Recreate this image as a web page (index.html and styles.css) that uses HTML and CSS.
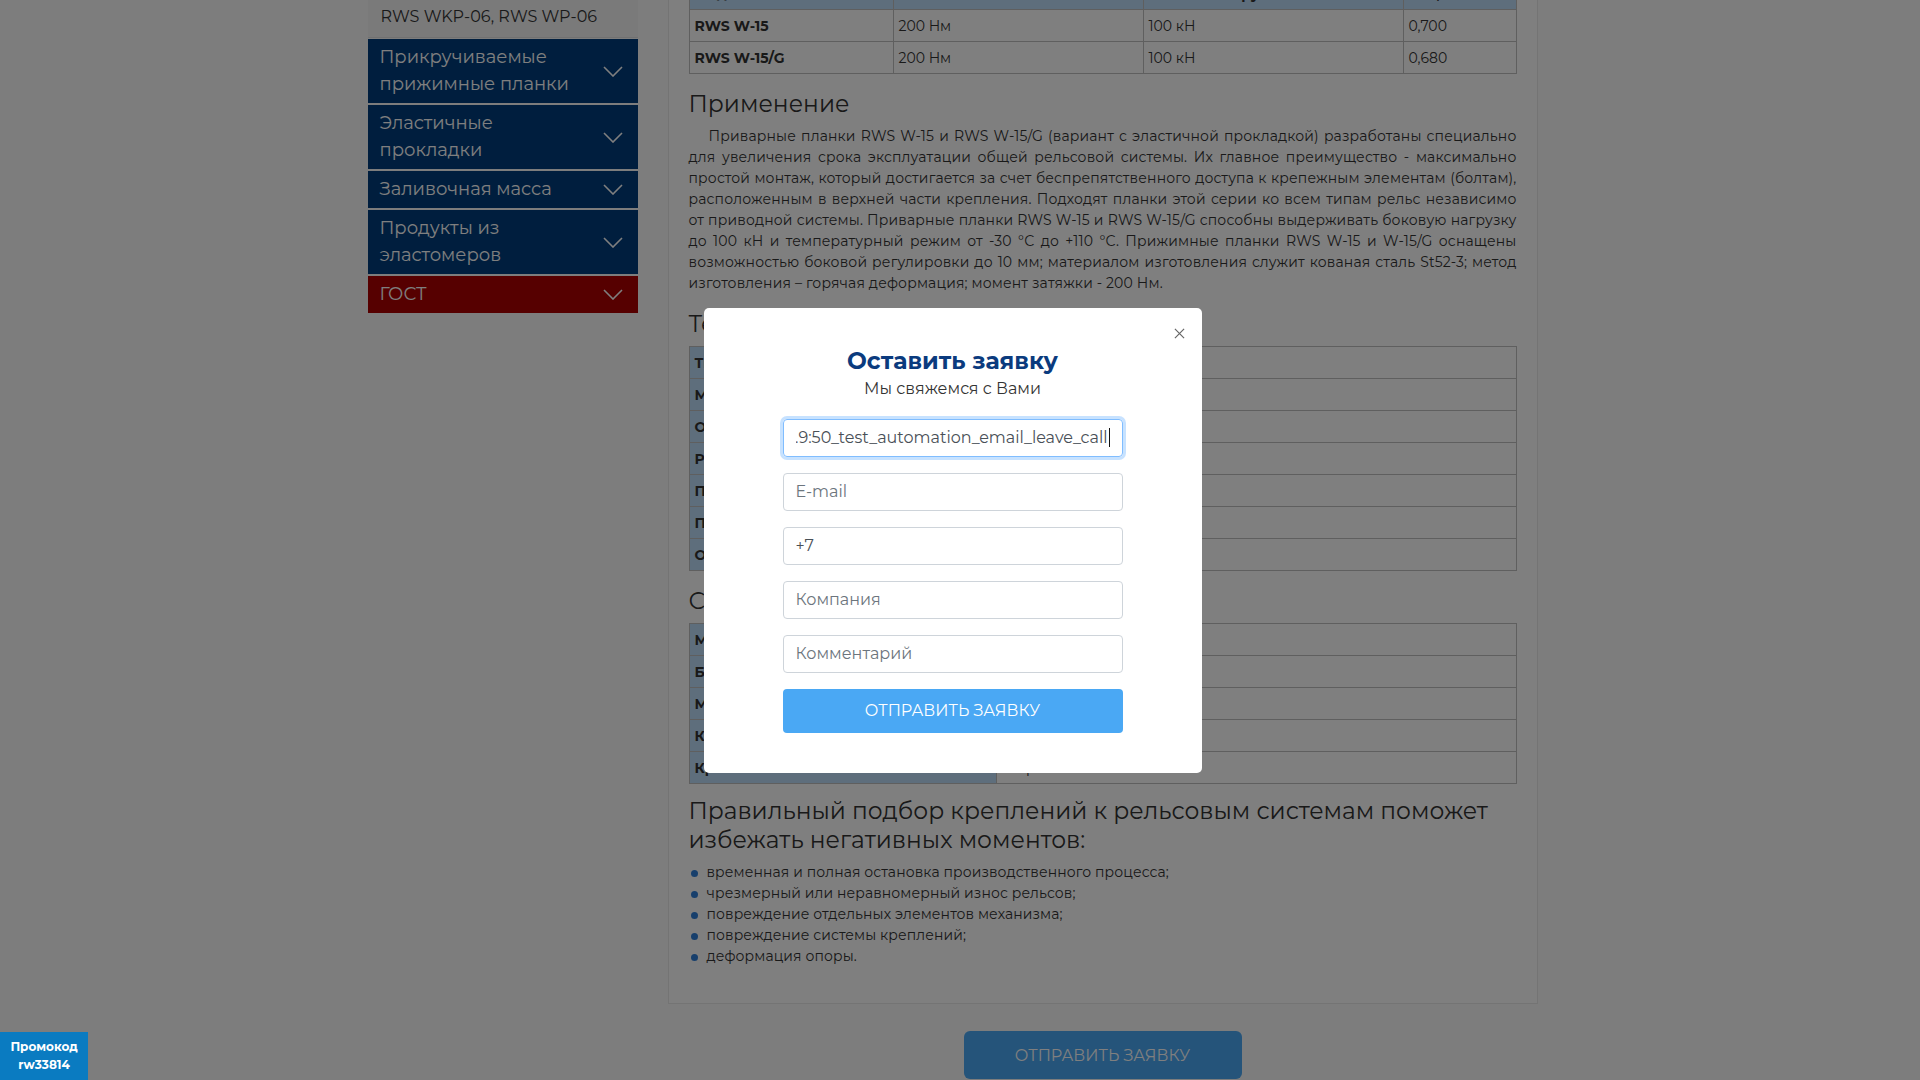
FILE: index.html
```html
<!DOCTYPE html>
<html lang="ru">
<head>
<meta charset="utf-8">
<title>RWS W-15</title>
<link rel="stylesheet" href="styles.css">
</head>
<body>
<div class="page">
  <div class="container">
    <aside class="sidebar">
      <div class="side-item light">RWS W-15, RWS W-15/G</div>
      <div class="side-item light">RWS W-40, RWS W-30</div>
      <div class="side-item light">RWS WKP-06, RWS WP-06</div>
      <div class="side-item blue"><span>Прикручиваемые прижимные планки</span><svg class="chev" viewBox="0 0 20 11"><polyline points="1,1 10,10 19,1"/></svg></div>
      <div class="side-item blue"><span>Эластичные прокладки</span><svg class="chev" viewBox="0 0 20 11"><polyline points="1,1 10,10 19,1"/></svg></div>
      <div class="side-item blue"><span>Заливочная масса</span><svg class="chev" viewBox="0 0 20 11"><polyline points="1,1 10,10 19,1"/></svg></div>
      <div class="side-item blue"><span>Продукты из эластомеров</span><svg class="chev" viewBox="0 0 20 11"><polyline points="1,1 10,10 19,1"/></svg></div>
      <div class="side-item red"><span>ГОСТ</span><svg class="chev" viewBox="0 0 20 11"><polyline points="1,1 10,10 19,1"/></svg></div>
    </aside>
    <main class="content">
      <div class="card">
        <h2>Характеристики</h2>
        <table class="spec four">
          <colgroup><col class="c1"><col class="c2"><col class="c3"><col></colgroup>
          <tr class="head"><td>Модель</td><td>Момент затяжки</td><td>Боковая нагрузка</td><td>Вес, кг</td></tr>
          <tr><td class="b">RWS W-15</td><td>200 Нм</td><td>100 кН</td><td>0,700</td></tr>
          <tr><td class="b">RWS W-15/G</td><td>200 Нм</td><td>100 кН</td><td>0,680</td></tr>
        </table>

        <h2>Применение</h2>
        <p class="text">Приварные планки RWS W-15 и RWS W-15/G (вариант с эластичной прокладкой) разработаны специально для увеличения срока эксплуатации общей рельсовой системы. Их главное преимущество - максимально простой монтаж, который достигается за счет беспрепятственного доступа к крепежным элементам (болтам), расположенным в верхней части крепления. Подходят планки этой серии ко всем типам рельс независимо от приводной системы. Приварные планки RWS W-15 и RWS W-15/G способны выдерживать боковую нагрузку до 100 кН и температурный режим от -30 °С до +110 °С. Прижимные планки RWS W-15 и W-15/G оснащены возможностью боковой регулировки до 10 мм; материалом изготовления служит кованая сталь St52-3; метод изготовления – горячая деформация; момент затяжки - 200 Нм.</p>

        <h2>Технические характеристики</h2>
        <table class="spec two">
          <colgroup><col class="k"><col></colgroup>
          <tr><td class="key">Тип крепления</td><td>приварное</td></tr>
          <tr><td class="key">Материал</td><td>St52-3</td></tr>
          <tr><td class="key">Обработка</td><td>ковка</td></tr>
          <tr><td class="key">Регулировка</td><td>10 мм</td></tr>
          <tr><td class="key">Предельная нагрузка</td><td>100 кН</td></tr>
          <tr><td class="key">Предел температур</td><td>+110 °С</td></tr>
          <tr><td class="key">Особенности</td><td>W-15/G</td></tr>
        </table>

        <h2>Состав комплекта</h2>
        <table class="spec two">
          <colgroup><col class="k"><col></colgroup>
          <tr><td class="key">Марка</td><td>RWS W-15</td></tr>
          <tr><td class="key">Болт</td><td>М16</td></tr>
          <tr><td class="key">Момент затяжки</td><td>200 Нм</td></tr>
          <tr><td class="key">Количество болтов</td><td>1</td></tr>
          <tr><td class="key">Крепление</td><td>сварка</td></tr>
        </table>

        <h2 class="long">Правильный подбор креплений к рельсовым системам поможет избежать негативных моментов:</h2>
        <ul class="dots">
          <li>временная и полная остановка производственного процесса;</li>
          <li>чрезмерный или неравномерный износ рельсов;</li>
          <li>повреждение отдельных элементов механизма;</li>
          <li>повреждение системы креплений;</li>
          <li>деформация опоры.</li>
        </ul>
      </div>
      <div class="cta"><button class="cta-btn" type="button">Отправить заявку</button></div>
    </main>
  </div>
</div>

<div class="overlay">
  <div class="modal">
    <svg class="close" viewBox="0 0 12 12"><path d="M1 1L11 11M11 1L1 11"/></svg>
    <div class="m-title">Оставить заявку</div>
    <div class="m-sub">Мы свяжемся с Вами</div>
    <div class="field focus"><div class="field-inner"><span class="val">07.05.2024.9:50_test_automation_email_leave_call</span><i class="caret"></i></div></div>
    <div class="field"><div class="field-inner"><span class="ph">E-mail</span></div></div>
    <div class="field"><div class="field-inner"><span class="val">+7</span></div></div>
    <div class="field"><div class="field-inner"><span class="ph">Компания</span></div></div>
    <div class="field"><div class="field-inner"><span class="ph">Комментарий</span></div></div>
    <button class="m-btn" type="button">Отправить заявку</button>
  </div>
</div>

<div class="promo">Промокод<br>rw33814</div>
</body>
</html>
```
FILE: styles.css
```css
* { box-sizing: border-box; }
html, body { margin: 0; padding: 0; }
body {
  font-family: "Montserrat", "DejaVu Sans", sans-serif;
  color: #333;
  background: #fbfbfb;
  overflow: hidden;
  height: 1080px;
}
.page {
  padding-right: 15px;
}
.container {
  width: 1170px;
  margin: -96px auto 0;
  display: flex;
  align-items: flex-start;
}

/* sidebar */
.sidebar {
  width: 270px;
  flex: none;
}
.side-item {
  display: flex;
  align-items: center;
  justify-content: space-between;
  color: #fff;
  font-size: 18px;
  line-height: 27px;
  padding: 5px 15px 5px 12px;
  margin-bottom: 2px;
}
.side-item span { width: 212px; }
.side-item.light {
  background: #f4f4f4;
  color: #333;
  font-size: 16px;
  line-height: 24px;
  padding: 11px 13px 8px;
  border-bottom: 1px solid #e2e2e2;
  margin-bottom: 1px;
}
.side-item.blue { background: #003c7c; }
.side-item.red { background: #ac0000; }
.chev {
  width: 20px;
  height: 11px;
  flex: none;
  fill: none;
  stroke: #fff;
  stroke-width: 1.6;
}

/* content */
.content {
  width: 900px;
  flex: none;
  margin-left: 15px;
  padding: 0 15px;
  min-height: 1300px;
}
.card {
  background: #fff;
  border: 1px solid #e8e8e8;
  padding: 20px 20px 36px;
}
h2 {
  font-weight: 400;
  font-size: 23.4px;
  line-height: 29px;
  margin: 15px 0 8px;
  color: #333;
}
h2.long { margin-top: 12px; margin-bottom: 8px; }
.spec {
  width: 100%;
  border-collapse: collapse;
  table-layout: fixed;
  font-size: 14px;
  margin-bottom: 0;
}
.spec td {
  border: 1px solid #bfbfbf;
  height: 32px;
  padding: 0 5px;
  white-space: nowrap;
  overflow: hidden;
}
.spec .head td { background: #bcdcf8; font-weight: 700; }
.spec td.b { font-weight: 700; }
.four .c1 { width: 204px; }
.four .c2 { width: 250px; }
.four .c3 { width: 260px; }
.two .k { width: 307px; }
.spec td.key { background: #bcdcf8; font-weight: 700; }
.text {
  margin: 0 0 14px;
  font-size: 14px;
  line-height: 21px;
  letter-spacing: 0.15px;
  text-align: justify;
  text-indent: 20px;
}
.dots {
  list-style: none;
  margin: 0;
  padding: 0;
  font-size: 14px;
  line-height: 21px;
  letter-spacing: 0.1px;
}
.dots li {
  position: relative;
  padding-left: 18px;
}
.dots li::before {
  content: "";
  position: absolute;
  left: 2px;
  top: 8px;
  width: 7px;
  height: 7px;
  border-radius: 50%;
  background: #2f7fd8;
}
.cta {
  display: flex;
  justify-content: center;
  padding-top: 27px;
}
.cta-btn {
  font-family: inherit;
  font-size: 16px;
  text-transform: uppercase;
  color: #fff;
  background: #4aa8f4;
  border: 0;
  border-radius: 6px;
  width: 278px;
  height: 48px;
}

/* modal */
.overlay {
  position: fixed;
  inset: 0;
  background: rgba(0, 0, 0, 0.5);
  display: flex;
  align-items: center;
  justify-content: center;
  padding-right: 15px;
  z-index: 10;
}
.modal {
  position: relative;
  width: 498px;
  background: #fff;
  border-radius: 5px;
  padding: 40px 79px 40px;
  text-align: center;
}
.close {
  position: absolute;
  top: 20px;
  right: 17px;
  width: 11px;
  height: 11px;
  stroke: #666;
  stroke-width: 1.3;
  fill: none;
}
.m-title {
  font-size: 23.5px;
  line-height: 28px;
  font-weight: 700;
  color: #0b3b7e;
  margin-top: -1px;
}
.m-sub {
  font-size: 16px;
  line-height: 24px;
  color: #333;
  margin-top: 2px;
  margin-bottom: 18px;
}
.field {
  height: 38px;
  border: 1px solid #ced4da;
  border-radius: 4px;
  padding: 0 12px;
  margin-bottom: 16px;
  display: flex;
  align-items: center;
  font-size: 16px;
}
.field.focus {
  border-color: #80bdff;
  box-shadow: 0 0 0 3px rgba(0, 123, 255, 0.22);
}
.field-inner {
  width: 100%;
  overflow: hidden;
  display: flex;
  justify-content: flex-start;
  align-items: center;
  white-space: nowrap;
}
.field.focus .field-inner { justify-content: flex-end; }
.val { color: #495057; flex: none; }
.ph { color: #6c757d; }
.caret {
  display: block;
  flex: none;
  width: 1px;
  height: 19px;
  background: #111;
  margin-left: 1px;
}
.m-btn {
  display: block;
  width: 100%;
  height: 44px;
  border: 0;
  border-radius: 4px;
  background: #4aa8f4;
  color: #fff;
  font-family: inherit;
  font-size: 16px;
  text-transform: uppercase;
}

.promo {
  position: fixed;
  left: 0;
  bottom: 0;
  width: 88px;
  height: 48px;
  background: #0a7bc1;
  color: #fff;
  font-size: 12px;
  font-weight: 700;
  line-height: 18px;
  text-align: center;
  padding-top: 6px;
  z-index: 20;
}
```
